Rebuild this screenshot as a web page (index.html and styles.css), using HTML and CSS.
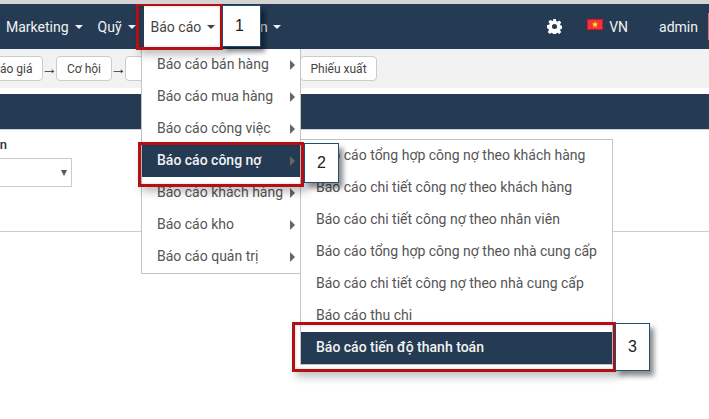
FILE: index.html
```html
<!DOCTYPE html>
<html lang="en">
<head>
    <meta charset="UTF-8">
    <meta name="viewport" content="width=device-width, initial-scale=1.0">
    <title>Báo cáo</title>
    <link rel="stylesheet" href="styles.css">
</head>
<body>
    <div class="page">
        <nav class="navbar">
            <a class="nav-link nav-first">Marketing <span class="caret"></span></a>
            <a class="nav-link">Quỹ <span class="caret"></span></a>
            <a class="nav-link nav-open">Báo cáo <span class="caret"></span></a>
            <a class="nav-link nav-hidden">Admin <span class="caret"></span></a>
            <div class="nav-right">
                <svg class="gear" viewBox="0 0 16 16" width="15" height="15">
                    <path fill="#fff" fill-rule="evenodd" d="M6.5 0h3l.4 2.200 1.300.6L13.100 1.500l2.100 2.100-1.300 1.900.6 1.300 2.200.4v3l-2.200.4-.6 1.300 1.300 1.900-2.100 2.100-1.900-1.300-1.300.6-.4 2.200h-3l-.4-2.200-1.300-.6-1.900 1.300-2.100-2.100 1.300-1.900-.6-1.300L0 9.500v-3l2.200-.4.6-1.300-1.300-1.900 2.100-2.100 1.900 1.300 1.300-.6zM8 5.300a2.700 2.700 0 1 0 0 5.400 2.700 2.700 0 0 0 0-5.400z"/>
                </svg>
                <svg class="flag" viewBox="0 0 16 11" width="16" height="11">
                    <rect width="16" height="11" fill="#f0353c"/>
                    <rect x="0.5" y="0.5" width="15" height="10" fill="none" stroke="#d8141c"/>
                    <polygon fill="#ffe81a" points="8,2 8.800,4.500 11.300,4.500 9.300,6 10,8.500 8,7 6,8.500 6.700,6 4.700,4.500 7.200,4.500"/>
                </svg>
                <span class="lang">VN</span>
                <span class="user">admin</span>
                <span class="avatar"></span>
            </div>
        </nav>

        <div class="steps">
            <span class="step step-first">Báo giá</span>
            <span class="arrow">→</span>
            <span class="step">Cơ hội</span>
            <span class="arrow">→</span>
            <span class="step step-wide">Đơn hàng</span>
            <span class="step step-last">Phiếu xuất</span>
        </div>

        <div class="title-bar"></div>

        <div class="filters">
            <div class="filter">
                <label class="filter-label">Nhân viên</label>
                <div class="filter-select"><span class="select-arrow"></span></div>
            </div>
        </div>
        <hr class="divider">

        <ul class="menu menu-main">
            <li class="menu-item">Báo cáo bán hàng <span class="sub-arrow"></span></li>
            <li class="menu-item">Báo cáo mua hàng <span class="sub-arrow"></span></li>
            <li class="menu-item">Báo cáo công việc <span class="sub-arrow"></span></li>
            <li class="menu-item active">Báo cáo công nợ <span class="sub-arrow"></span></li>
            <li class="menu-item">Báo cáo khách hàng <span class="sub-arrow"></span></li>
            <li class="menu-item">Báo cáo kho <span class="sub-arrow"></span></li>
            <li class="menu-item">Báo cáo quản trị <span class="sub-arrow"></span></li>
        </ul>

        <ul class="menu menu-sub">
            <li class="menu-item">Báo cáo tổng hợp công nợ theo khách hàng</li>
            <li class="menu-item">Báo cáo chi tiết công nợ theo khách hàng</li>
            <li class="menu-item">Báo cáo chi tiết công nợ theo nhân viên</li>
            <li class="menu-item">Báo cáo tổng hợp công nợ theo nhà cung cấp</li>
            <li class="menu-item">Báo cáo chi tiết công nợ theo nhà cung cấp</li>
            <li class="menu-item">Báo cáo thu chi</li>
            <li class="menu-item active">Báo cáo tiến độ thanh toán</li>
        </ul>

        <!-- callouts pasted over the screenshot -->
        <div class="mark mark-1"></div>
        <div class="mark mark-2"></div>
        <div class="mark mark-3"></div>
        <div class="badge badge-1">1</div>
        <div class="badge badge-2">2</div>
        <div class="badge badge-3">3</div>
    </div>
</body>
</html>
```

FILE: styles.css
```css
* {
    box-sizing: border-box;
}
html, body {
    margin: 0;
    padding: 0;
    height: 100%;
    overflow: hidden;
    background: #fff;
}
.page {
    position: relative;
    width: 709px;
    height: 419px;
    overflow: hidden;
    border-top: 4px solid #d4d4d4;
    font-family: Roboto, "Liberation Sans", sans-serif;
    font-size: 14px;
    color: #444;
}
.navbar {
    display: flex;
    align-items: center;
    height: 45px;
    background: #243b53;
    color: #f2f2f2;
}
.nav-link {
    display: flex;
    align-items: center;
    height: 100%;
    padding: 0 8px;
    white-space: nowrap;
    font-size: 14px;
}
.nav-first {
    padding: 0 7px 0 6px;
}
.nav-open {
    color: #444;
    background: #fff;
    padding: 0 8px 0 7px;
}
.nav-hidden {
    margin-left: -4px;
}
.nav-hidden .caret {
    margin-left: 5px;
}
.caret {
    display: inline-block;
    margin-left: 6px;
    border-top: 4px solid currentColor;
    border-left: 4px solid transparent;
    border-right: 4px solid transparent;
}
.nav-right {
    display: flex;
    align-items: center;
    margin-left: auto;
}
.gear {
    margin-right: 25px;
}
.flag {
    margin-right: 6px;
    margin-top: -4px;
}
.lang {
    margin-right: 31px;
}
.user {
    margin-right: 10px;
}
.avatar {
    width: 1px;
    height: 27px;
    background: #c97a7a;
}
.steps {
    display: flex;
    align-items: center;
    height: 39px;
    background: #f2f2f2;
    font-size: 12px;
}
.step {
    display: flex;
    align-items: center;
    justify-content: center;
    height: 25px;
    padding: 0 10px;
    background: #fff;
    border: 1px solid #ccc;
    border-radius: 4px;
    white-space: nowrap;
}
.step-first {
    width: 61px;
    margin-left: -18px;
}
.step-wide {
    width: 160px;
}
.step-last {
    width: 77px;
    margin-left: 15px;
}
.arrow {
    display: flex;
    justify-content: center;
    width: 13px;
    font-family: "Liberation Sans", sans-serif;
    font-size: 16px;
    color: #333;
}
.title-bar {
    height: 36px;
    margin-top: 6px;
    background: #243b53;
    border-bottom: 1px solid #ccd3da;
}
.filters {
    padding-top: 6px;
}
.filter {
    width: 72px;
}
.filter-label {
    display: flex;
    justify-content: flex-end;
    height: 22px;
    line-height: 18px;
    white-space: nowrap;
    font-size: 13px;
    font-weight: 500;
    color: #333;
    padding-right: 65px;
}
.filter-select {
    display: flex;
    align-items: center;
    justify-content: flex-end;
    height: 29px;
    padding-right: 4px;
    background: #fff;
    border: 1px solid #ccc;
    border-left: 0;
}
.select-arrow {
    border-top: 6px solid #555;
    border-left: 3px solid transparent;
    border-right: 3px solid transparent;
}
.divider {
    margin: 44px 0 0;
    border: 0;
    border-top: 1px solid #ccc;
}
.menu {
    position: absolute;
    margin: 0;
    padding: 0;
    list-style: none;
    background: #fff;
    border: 1px solid #c4c4c4;
    border-top-width: 0;
}
.menu-main {
    left: 141px;
    top: 45px;
    width: 160px;
    height: 225px;
}
.menu-sub {
    left: 300px;
    top: 135px;
    width: 313px;
    height: 226px;
    border-top-width: 1px;
}
.menu-item {
    position: relative;
    height: 32px;
    line-height: 31px;
    padding-left: 15px;
    white-space: nowrap;
    font-size: 14px;
    color: #555;
}
.menu-item.active {
    background: #243b53;
    color: #f2f2f2;
    font-weight: 500;
}
.sub-arrow {
    position: absolute;
    right: 5px;
    top: 11px;
    border-left: 5px solid #666;
    border-top: 5px solid transparent;
    border-bottom: 5px solid transparent;
}
.mark {
    position: absolute;
    border: 3px solid #b30f14;
    box-shadow: 4px 5px 8px rgba(0, 0, 0, 0.25), inset 0 0 3px rgba(0, 0, 0, 0.2);
}
.mark-1 {
    left: 136px;
    top: -1px;
    width: 87px;
    height: 47px;
}
.mark-2 {
    left: 138px;
    top: 138px;
    width: 166px;
    height: 45px;
}
.mark-3 {
    left: 292px;
    top: 318px;
    width: 324px;
    height: 50px;
}
.badge {
    position: absolute;
    display: flex;
    align-items: center;
    justify-content: center;
    background: #fff;
    border: 1px solid #1f4e79;
    font-family: "Liberation Sans", sans-serif;
    font-size: 16px;
    color: #222;
    box-shadow: 4px 5px 5px rgba(0, 0, 0, 0.45);
}
.badge-1 {
    left: 222px;
    top: 1px;
    width: 39px;
    height: 42px;
    padding-right: 4px;
}
.badge-2 {
    left: 304px;
    top: 139px;
    width: 35px;
    height: 40px;
}
.badge-3 {
    left: 615px;
    top: 319px;
    width: 35px;
    height: 48px;
}
```
